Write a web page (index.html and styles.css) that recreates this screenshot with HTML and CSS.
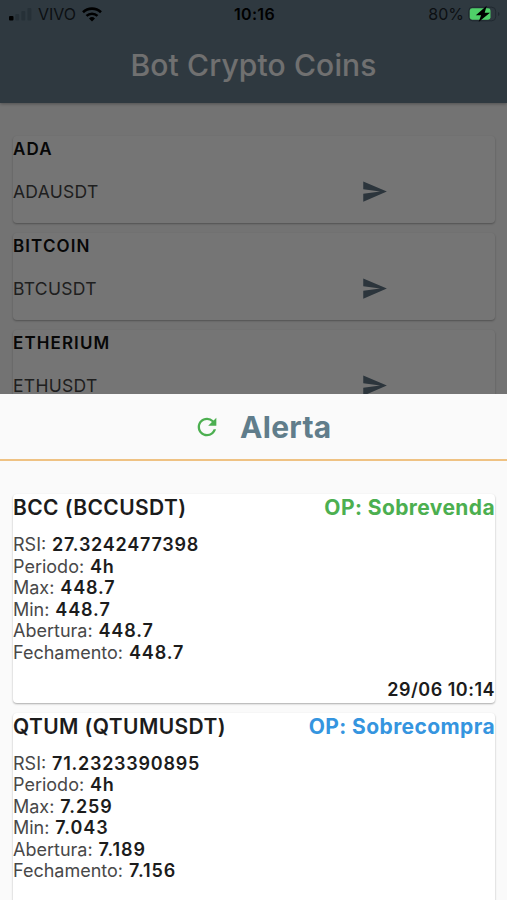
FILE: index.html
```html
<!DOCTYPE html>
<html lang="pt-BR">
<head>
<meta charset="utf-8">
<title>Bot Crypto Coins</title>
<link rel="stylesheet" href="styles.css">
</head>
<body>
<div class="app">
  <header class="appbar">
    <div class="status">
      <div class="status-left">
        <svg class="signal" width="23" height="14" viewBox="0 0 23 14"><rect x="0" y="9" width="4.5" height="4.5" rx="1" fill="#000"/><g fill="#536a79"><rect x="6.2" y="7" width="4" height="6.5" rx="1"/><rect x="12.3" y="4" width="4" height="9.5" rx="1"/><rect x="18.4" y="1" width="4" height="12.5" rx="1"/></g></svg>
        <span class="carrier">VIVO</span>
        <svg class="wifi" width="20" height="15" viewBox="0 0 20 15" fill="none" stroke="#000" stroke-width="2.6"><path d="M1 5.2a13 13 0 0 1 18 0M4.5 8.9a8 8 0 0 1 11 0"/><path d="M10 14.5 7 11.5a4.3 4.3 0 0 1 6 0z" fill="#000" stroke="none"/></svg>
      </div>
      <span class="clock">10:16</span>
      <div class="status-right">
        <span class="percent">80%</span>
        <svg class="battery" width="32" height="18" viewBox="0 0 32 18"><rect x=".7" y="2.2" width="27" height="13.6" rx="4" fill="none" stroke="#202930" stroke-width="1"/><path d="M30 7v4q1.5-.5 1.5-2T30 7" fill="#202930"/><rect x="1.8" y="3.3" width="20.7" height="11.4" rx="2.4" fill="#4fd069"/><path d="m18.7.8-10.9 9.5h5.3L10.6 17 22 7.7h-5.3z" fill="#000"/></svg>
      </div>
    </div>
    <h1 class="title">Bot Crypto Coins</h1>
  </header>
  <main class="coins">
    <article class="coin"><h2 class="coin-name">ADA</h2><div class="coin-row"><span class="pair">ADAUSDT</span><svg class="send" viewBox="0 0 24 24"><path d="M2.01 21 23 12 2.01 3 2 10l15 2-15 2z"/></svg></div></article>
    <article class="coin"><h2 class="coin-name">BITCOIN</h2><div class="coin-row"><span class="pair">BTCUSDT</span><svg class="send" viewBox="0 0 24 24"><path d="M2.01 21 23 12 2.01 3 2 10l15 2-15 2z"/></svg></div></article>
    <article class="coin"><h2 class="coin-name">ETHERIUM</h2><div class="coin-row"><span class="pair">ETHUSDT</span><svg class="send" viewBox="0 0 24 24"><path d="M2.01 21 23 12 2.01 3 2 10l15 2-15 2z"/></svg></div></article>
  </main>
  <div class="scrim"></div>
  <section class="sheet">
    <div class="sheet-head">
      <svg class="refresh" viewBox="0 0 24 24"><path d="M17.65 6.35A7.958 7.958 0 0 0 12 4c-4.42 0-7.99 3.58-7.99 8s3.57 8 7.99 8c3.73 0 6.84-2.55 7.73-6h-2.08A5.99 5.99 0 0 1 12 18c-3.31 0-6-2.69-6-6s2.69-6 6-6c1.66 0 3.14.69 4.22 1.78L13 11h7V4z"/></svg>
      <h2 class="sheet-title">Alerta</h2>
    </div>
    <div class="alerts">
      <article class="alert">
        <div class="alert-head"><h3>BCC (BCCUSDT)</h3><span class="op sell">OP: Sobrevenda</span></div>
        <ul class="facts">
          <li>RSI: <b class="long">27.3242477398</b></li>
          <li>Periodo: <b>4h</b></li>
          <li>Max: <b>448.7</b></li>
          <li>Min: <b>448.7</b></li>
          <li>Abertura: <b>448.7</b></li>
          <li>Fechamento: <b>448.7</b></li>
        </ul>
        <time class="when">29/06 10:14</time>
      </article>
      <article class="alert">
        <div class="alert-head"><h3>QTUM (QTUMUSDT)</h3><span class="op buy">OP: Sobrecompra</span></div>
        <ul class="facts">
          <li>RSI: <b class="long">71.2323390895</b></li>
          <li>Periodo: <b>4h</b></li>
          <li>Max: <b>7.259</b></li>
          <li>Min: <b>7.043</b></li>
          <li>Abertura: <b>7.189</b></li>
          <li>Fechamento: <b>7.156</b></li>
        </ul>
      </article>
    </div>
  </section>
</div>
</body>
</html>
```
FILE: styles.css
```css
* { box-sizing: border-box; }
body { margin: 0; font-family: Inter, "Liberation Sans", sans-serif; color: #1c1c1c; }
h1, h2, h3, ul { margin: 0; padding: 0; list-style: none; }
svg { display: block; flex: none; }
.app { position: relative; width: 507px; height: 900px; overflow: hidden; background: #fafafa; }

.appbar { height: 103px; background: #667d8d; box-shadow: 0 1px 3px rgba(0,0,0,.3); }
.status { display: grid; grid-template-columns: 1fr auto 1fr; align-items: center; height: 28px; padding: 0 7px 0 9px; font-size: 16px; color: #000; }
.status-left, .status-right { display: flex; align-items: center; }
.status-right { justify-content: flex-end; gap: 4px; }
.carrier { margin-left: 6px; color: #1c242a; }
.wifi { margin-left: 6px; }
.clock { font-weight: 600; letter-spacing: .3px; }
.percent { color: #1c242a; }
/* The charging battery keeps its full brightness above the scrim. */
.battery { position: relative; z-index: 1; }
.title { padding-top: 17px; text-align: center; font-size: 30px; line-height: 40px; font-weight: 500; letter-spacing: .15px; color: #f4f4f4; }

.coins { display: grid; gap: 10px; padding: 33px 12px 0 13px; }
.coin { height: 87px; background: #fff; border-radius: 4px; box-shadow: 0 1px 2px rgba(0,0,0,.3); }
.coin-name { font-size: 17px; line-height: 26px; font-weight: 600; letter-spacing: 1.1px; color: #111; }
.coin-row { display: flex; align-items: center; height: 58px; }
.pair { width: 348px; font-size: 17.5px; letter-spacing: .3px; color: #444; }
.send { width: 27px; height: 27px; fill: #607484; }

.scrim { position: absolute; inset: 0; background: rgba(0,0,0,.54); }
.sheet { position: absolute; top: 394px; left: 0; right: 0; bottom: 0; z-index: 2; background: #fafafa; overflow: hidden; }
.sheet-head { display: flex; align-items: center; height: 67px; padding-left: 193px; border-bottom: 2px solid #efc283; }
.refresh { width: 28px; height: 28px; fill: #4caf50; }
.sheet-title { margin-left: 19px; font-size: 30px; line-height: 40px; font-weight: 700; letter-spacing: .3px; color: #607d8b; }
.alerts { display: grid; gap: 10px; padding: 33px 12px 0 13px; }
.alert { display: flex; flex-direction: column; height: 208.5px; background: #fff; border-radius: 4px; box-shadow: 0 1px 2px rgba(0,0,0,.32); }
.alert-head { display: flex; justify-content: space-between; height: 27px; line-height: 27px; }
.alert-head h3 { font-size: 21px; font-weight: 600; letter-spacing: .4px; }
.op { font-size: 21px; font-weight: 700; letter-spacing: .4px; }
.sell { color: #4caf50; }
.buy { color: #3595df; }
.facts { margin-top: 13px; font-size: 18px; line-height: 21.6px; color: #484848; }
.facts b { margin-left: .8px; font-weight: 600; letter-spacing: .9px; color: #1c1c1c; }
.facts .long { letter-spacing: .75px; }
.when { margin: auto 0 2px auto; font-size: 18px; line-height: 22px; font-weight: 600; letter-spacing: .5px; color: #1c1c1c; }
```
